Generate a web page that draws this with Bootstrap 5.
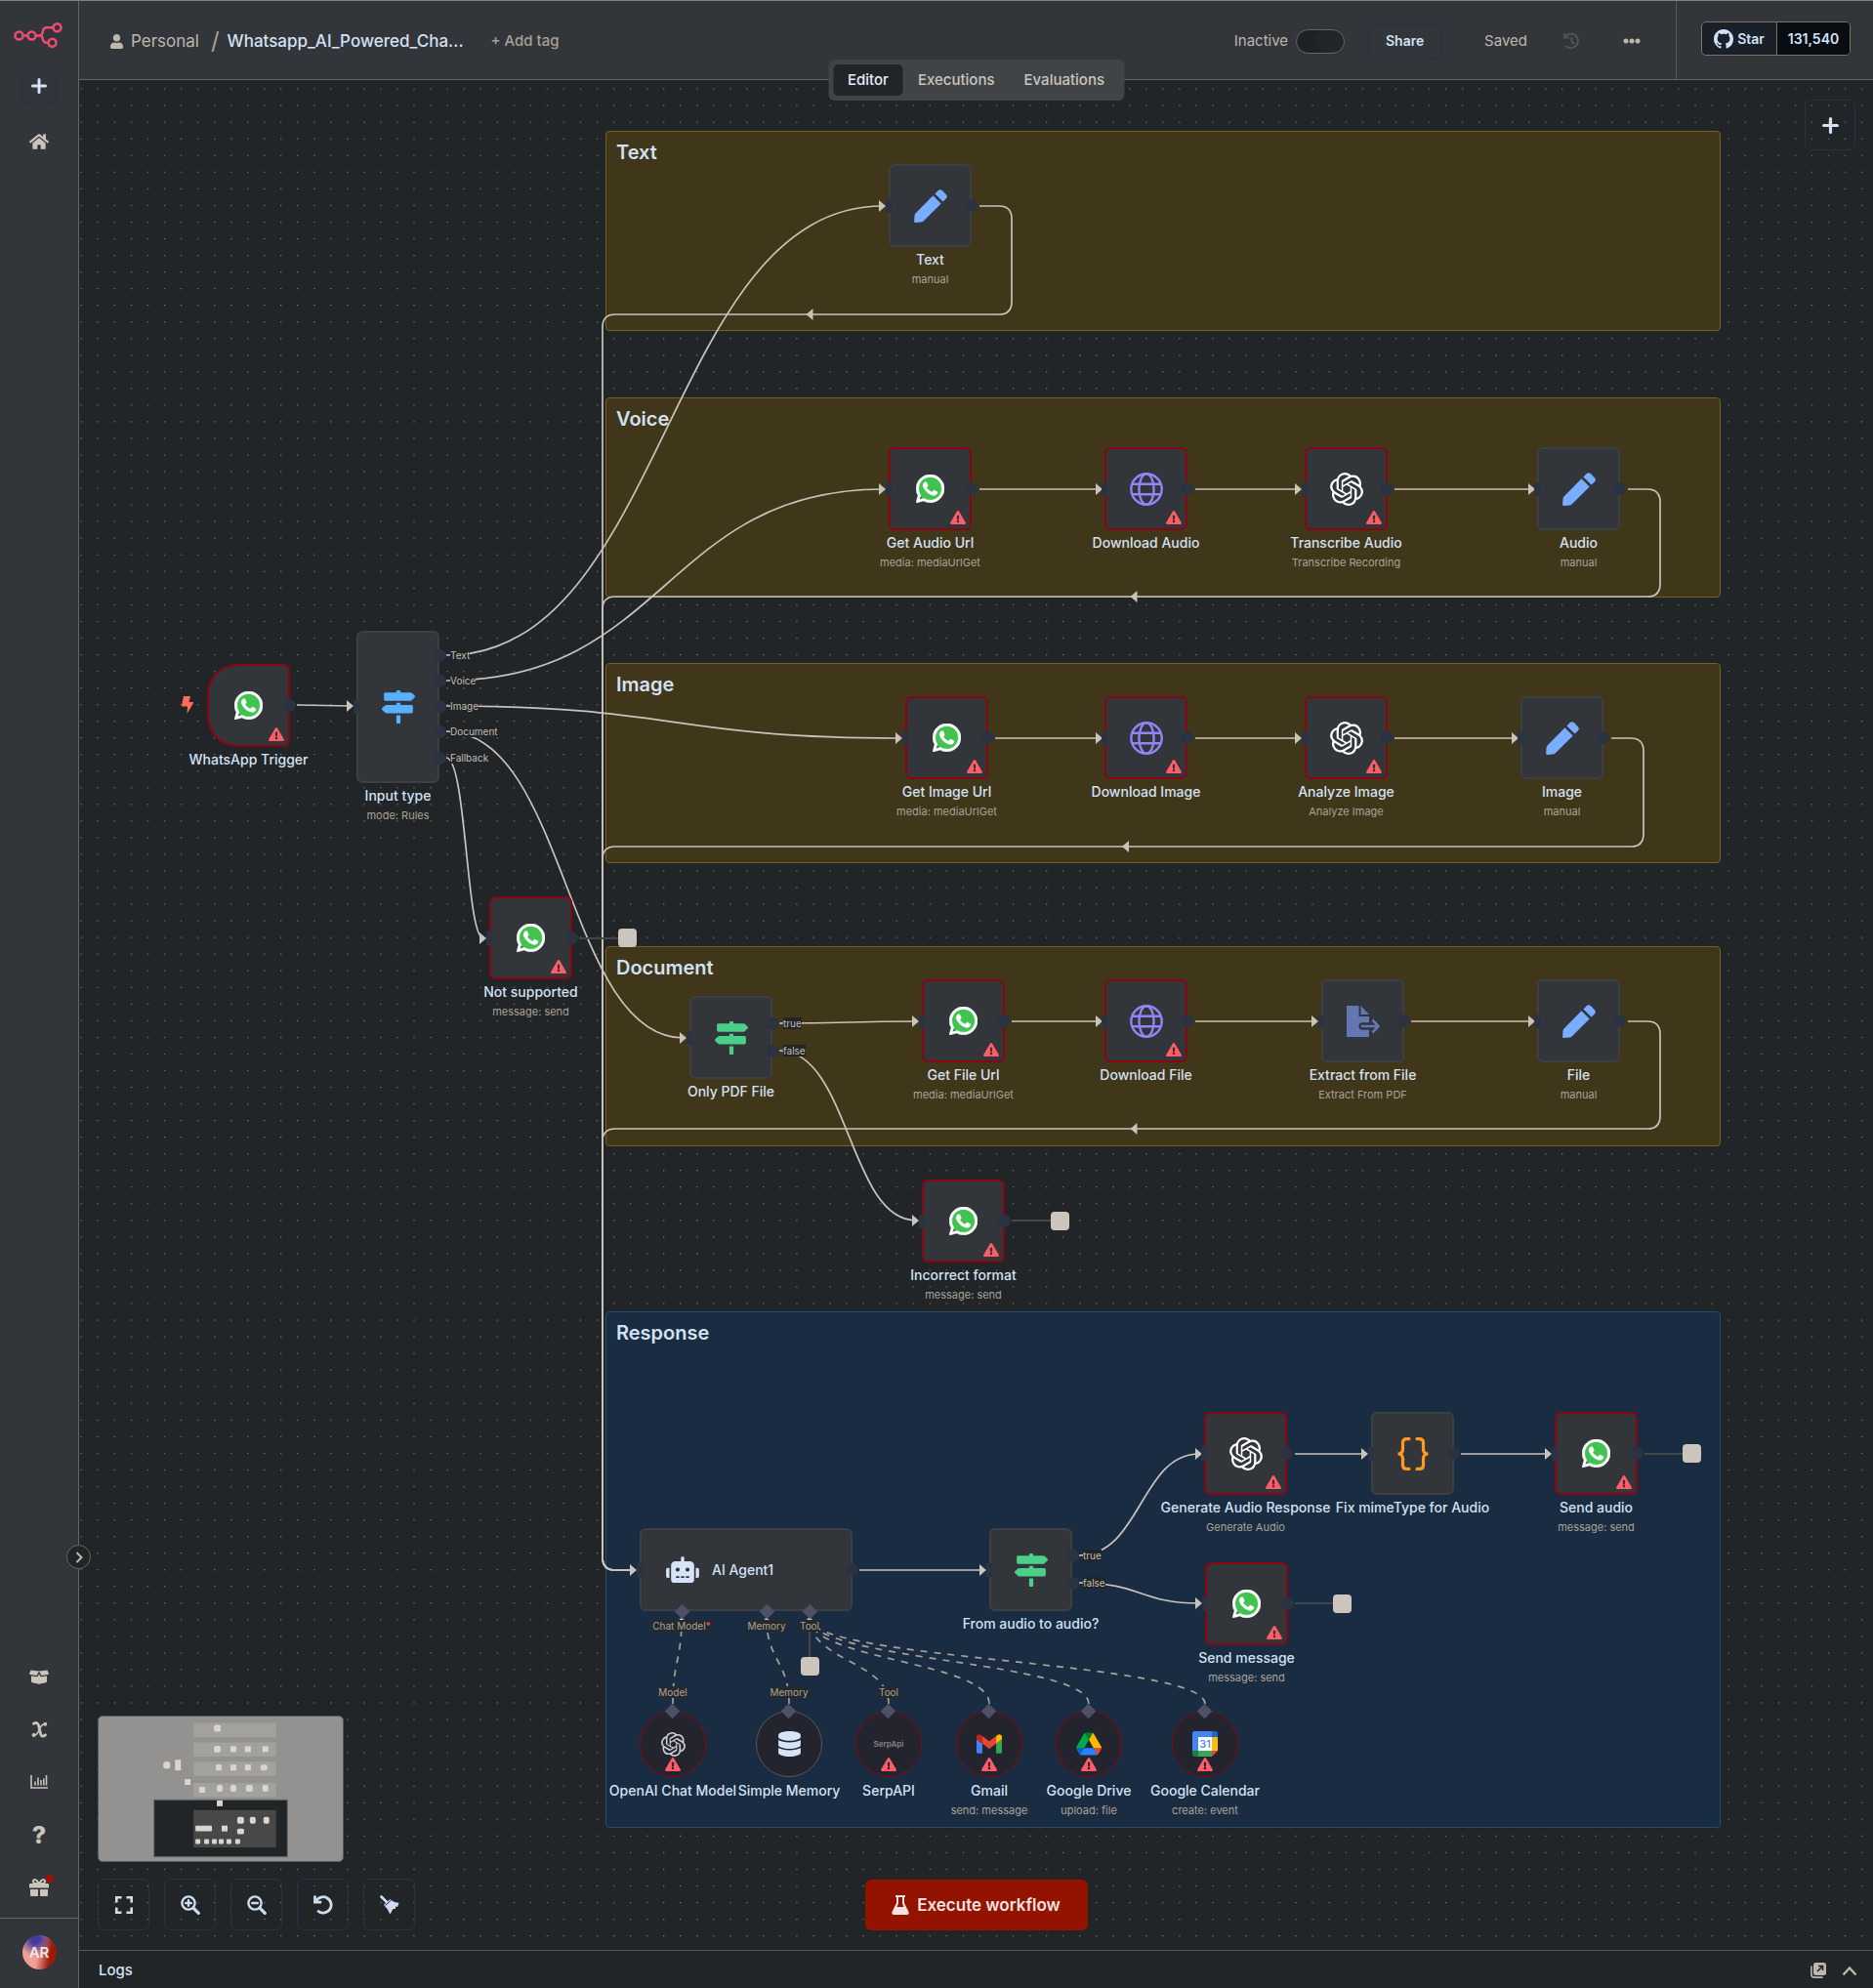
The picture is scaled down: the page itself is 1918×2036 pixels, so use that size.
<!DOCTYPE html>
<html lang="en" data-bs-theme="dark">
<head>
<meta charset="utf-8">
<meta name="viewport" content="width=device-width, initial-scale=1">
<title>Whatsapp_AI_Powered_Chatbot - n8n</title>
<link href="https://cdn.jsdelivr.net/npm/bootstrap@5.3.0/dist/css/bootstrap.min.css" rel="stylesheet">
<style>
  :root { --panel:#323539; --ground:#212528; --line:#6b6459; --ink:#d3e1f3; --dim:#bdb7ae; --edge:#c8c3bb; --outline:#26304a; --danger:#8c0410; --handle:#2b3342; }
  body { background:var(--ground); color:var(--ink); font-family:Inter, "Liberation Sans", sans-serif; font-size:15px; line-height:20px; border-top:1px solid #7d8084; }
  svg { display:block; }
  .shell { min-height:calc(100vh - 1px); }
  .btn { --bs-btn-border-radius:6px; line-height:20px; }

  .side { width:81px; background:var(--panel); border-right:1px solid var(--line); color:#c9c4bc; position:relative; }
  .side a { color:inherit; height:54px; text-decoration:none; }
  .side .logo { height:48px; padding-right:3px; }
  .side .add { width:38px; height:37px; margin-top:20px; border:1px solid var(--outline); color:var(--ink); }
  .side .home { margin-top:12px; }
  .side .userbox { border-top:1px solid var(--line); height:72px; padding-bottom:2px; }
  .side .glyph-q { font-weight:800; font-size:25px; }
  .dot-new { position:absolute; width:8px; height:8px; border-radius:50%; background:#a01200; top:14px; right:25px; }
  .avatar { width:35px; height:35px; border-radius:50%; font-weight:600; color:#f3e6e3; background:radial-gradient(circle at 38% 12%, #443a9c 0 12%, transparent 45%), linear-gradient(100deg, #ef9f95 45%, #9a1a0c 78%); }
  .expander { position:absolute; right:-13px; bottom:429px; width:25px; height:25px; border-radius:50%; border:1px solid var(--line); background:var(--ground); color:var(--dim); z-index:5; padding:0; }

  .topbar { height:81px; background:var(--panel); border-bottom:1px solid var(--line); }
  .crumb { font-size:17px; padding-top:2px; }
  .crumb a { color:var(--dim); }
  .crumb .wf { color:var(--ink); font-weight:500; }
  .slash { font-size:24px; color:#a8a196; }
  .addtag { color:#a8a196; font-size:15px; font-weight:500; border:0; background:none; padding:0; }
  .soft { color:var(--dim); padding-top:2px; }
  .form-switch .form-check-input.activator { width:50px; height:25px; margin:0; background-color:#222629; border:1px solid #6b6459; --bs-form-switch-bg:none; box-shadow:inset 21px 0 0 -1px #1f2225; }
  .share { width:75px; height:37px; border:1px solid var(--outline); color:var(--ink); font-weight:600; font-size:14px; padding:0; }
  .saved { margin:0 24px 0 44px; }
  .more { margin:0 36px 0 44px; }
  .ghbox { border-left:1px solid #55575a; padding:0 23px 3px 25px; }
  .gh { width:153px; height:35px; border:1px solid #7b7260; border-radius:5px; overflow:hidden; font-weight:600; font-size:14px; text-decoration:none; color:#d1e4f7; background:#1a2027; }
  .gh .count { background:#090c12; border-left:1px solid #7b7260; width:75px; }
  .modes { position:absolute; top:60px; left:50%; transform:translateX(-50%); z-index:4; background:#404447; padding:5px; border-radius:6px; }
  .modes .nav-link { padding:6px 15px; height:32px; color:#cbc5bd; font-weight:500; border-radius:5px; }
  .modes .nav-link.active { background:#212528; color:#e2edfb; }

  .canvas { position:relative; overflow:hidden; }
  .layer { position:absolute; left:0; top:0; width:100%; height:100%; }
  .note { position:absolute; width:1142px; height:205px; border:1px solid #74601f; border-radius:4px; background:#40361a; padding:8px 10px; font-size:20px; line-height:26px; font-weight:600; }
  .note.blue { background:#192c41; border-color:#264c6e; }
  .wnode { position:absolute; width:85px; height:85px; background:var(--panel); border:2px solid #3c4044; border-radius:6px; display:flex; align-items:center; justify-content:center; }
  .wnode.bad { border-color:var(--danger); }
  .wnode.start { border-radius:31px 6px 6px 31px; }
  .wnode.tall { height:156px; }
  .wnode.wide { width:218px; justify-content:flex-start; padding-left:25px; gap:13px; font-weight:500; font-size:14px; }
  .wnode.disc { width:68px; height:68px; border-radius:50%; background:#24242e; border-width:1px; border-color:#55575a; }
  .wnode.disc.bad { border-color:var(--danger); }
  .caption { position:absolute; top:100%; left:50%; transform:translateX(-50%); padding-top:6px; text-align:center; white-space:nowrap; font-size:14px; line-height:18px; font-weight:500; }
  .caption div { font-size:11px; line-height:16px; font-weight:400; color:#aaa398; padding-top:3px; }
  .warn { position:absolute; right:4px; bottom:4px; color:#ff5c68; }
  .disc .warn { right:25px; bottom:5px; }
  .hin, .hout { position:absolute; background:var(--handle); }
  .hin { width:6px; height:14px; }
  .hout { width:13px; height:13px; border-radius:50%; }
  .dia { position:absolute; width:11px; height:11px; background:#4f5067; transform:rotate(45deg); }
  .tagtext { position:absolute; font-size:10px; line-height:12px; color:#c3bdb3; background:#212528; white-space:nowrap; }
  .tagtext.mid { transform:translateX(-50%); background:#26292b; color:#aaa398; }
  .tagtext b { color:#ff4a4a; font-weight:500; }
  .plusbox { position:absolute; width:19px; height:19px; border-radius:4px; border:0; padding:0; background:#cbc5bd; }
  .bolt { position:absolute; }
  .serp { font-size:8px; color:#85858c; font-weight:600; }

  .addnode { position:absolute; top:20px; right:18px; width:52px; height:52px; border:1px solid var(--outline); color:var(--ink); padding:0; }
  .dock { position:absolute; left:19px; bottom:20px; }
  .minimap { border:1px solid #55585c; border-radius:5px; width:252px; height:150px; margin-bottom:17px; overflow:hidden; background:#949290; }
  .tools { gap:15px; }
  .dock .btn { width:53px; height:53px; border:1px solid var(--outline); color:#cddcf0; padding:0; }
  .run { position:absolute; bottom:20px; left:50%; transform:translateX(-50%); width:228px; height:52px; background:#931200; color:#f1e4e1; font-weight:600; font-size:17px; padding:0; border:0; }
  .run:hover { background:#a51500; color:#fff; }
  .logs { height:39px; border-top:1px solid #55585a; font-weight:500; padding:2px 16px 0 20px; }
</style>
<script src="https://cdn.jsdelivr.net/npm/bootstrap@5.3.0/dist/js/bootstrap.bundle.min.js"></script>
</head>
<body>

<svg class="d-none" aria-hidden="true">
  <symbol id="i-whatsapp" viewBox="0 0 24 24"><circle cx="12" cy="11.9" r="10.6" fill="#40c351"/><path fill="#fff" stroke="#fff" stroke-width=".5" d="M17.472 14.382c-.297-.149-1.758-.867-2.03-.967-.273-.099-.471-.148-.67.15-.197.297-.767.966-.94 1.164-.173.199-.347.223-.644.075-.297-.15-1.255-.463-2.39-1.475-.883-.788-1.48-1.761-1.653-2.059-.173-.297-.018-.458.13-.606.134-.133.298-.347.446-.52.149-.174.198-.298.298-.497.099-.198.05-.371-.025-.52-.075-.149-.669-1.612-.916-2.207-.242-.579-.487-.5-.669-.51-.173-.008-.371-.01-.57-.01-.198 0-.52.074-.792.372-.272.297-1.04 1.016-1.04 2.479 0 1.462 1.065 2.875 1.213 3.074.149.198 2.096 3.2 5.077 4.487.709.306 1.262.489 1.694.625.712.227 1.36.195 1.871.118.571-.085 1.758-.719 2.006-1.413.248-.694.248-1.289.173-1.413-.074-.124-.272-.198-.57-.347m-5.421 7.403h-.004a9.87 9.87 0 01-5.031-1.378l-.361-.214-3.741.982.998-3.648-.235-.374a9.86 9.86 0 01-1.51-5.26c.001-5.45 4.436-9.884 9.888-9.884 2.64 0 5.122 1.03 6.988 2.898a9.825 9.825 0 012.893 6.994c-.003 5.45-4.437 9.884-9.885 9.884m8.413-18.297A11.815 11.815 0 0012.05 0C5.495 0 .16 5.335.157 11.892c0 2.096.547 4.142 1.588 5.945L.057 24l6.305-1.654a11.882 11.882 0 005.683 1.448h.005c6.554 0 11.89-5.335 11.893-11.893a11.821 11.821 0 00-3.48-8.413z"/></symbol>
  <symbol id="i-openai" viewBox="0 0 24 24"><path fill="currentColor" d="M22.2819 9.8211a5.9847 5.9847 0 0 0-.5157-4.9108 6.0462 6.0462 0 0 0-6.5098-2.9A6.0651 6.0651 0 0 0 4.9807 4.1818a5.9847 5.9847 0 0 0-3.9977 2.9 6.0462 6.0462 0 0 0 .7427 7.0966 5.98 5.98 0 0 0 .511 4.9107 6.051 6.051 0 0 0 6.5146 2.9001A5.9847 5.9847 0 0 0 13.2599 24a6.0557 6.0557 0 0 0 5.7718-4.2058 5.9894 5.9894 0 0 0 3.9977-2.9001 6.0557 6.0557 0 0 0-.7475-7.0729zm-9.022 12.6081a4.4755 4.4755 0 0 1-2.8764-1.0408l.1419-.0804 4.7783-2.7582a.7948.7948 0 0 0 .3927-.6813v-6.7369l2.02 1.1686a.071.071 0 0 1 .038.052v5.5826a4.504 4.504 0 0 1-4.4945 4.4944zm-9.6607-4.1254a4.4708 4.4708 0 0 1-.5346-3.0137l.142.0852 4.783 2.7582a.7712.7712 0 0 0 .7806 0l5.8428-3.3685v2.3324a.0804.0804 0 0 1-.0332.0615L9.74 19.9502a4.4992 4.4992 0 0 1-6.1408-1.6464zM2.3408 7.8956a4.485 4.485 0 0 1 2.3655-1.9728V11.6a.7664.7664 0 0 0 .3879.6765l5.8144 3.3543-2.0201 1.1685a.0757.0757 0 0 1-.071 0l-4.8303-2.7865A4.504 4.504 0 0 1 2.3408 7.872zm16.5963 3.8558L13.1038 8.364 15.1192 7.2a.0757.0757 0 0 1 .071 0l4.8303 2.7913a4.4944 4.4944 0 0 1-.6765 8.1042v-5.6772a.79.79 0 0 0-.407-.667zm2.0107-3.0231l-.142-.0852-4.7735-2.7818a.7759.7759 0 0 0-.7854 0L9.409 9.2297V6.8974a.0662.0662 0 0 1 .0284-.0615l4.8303-2.7866a4.4992 4.4992 0 0 1 6.6802 4.66zM8.3065 12.863l-2.02-1.1638a.0804.0804 0 0 1-.038-.0567V6.0742a4.4992 4.4992 0 0 1 7.3757-3.4537l-.142.0805L8.704 5.459a.7948.7948 0 0 0-.3927.6813zm1.0976-2.3654l2.602-1.4998 2.6069 1.4998v2.9994l-2.5974 1.4997-2.6067-1.4997Z"/></symbol>
  <symbol id="i-pencil" viewBox="0 0 34 34"><g fill="#78adff"><path d="M19.5 6.3 27.7 14.5 9.8 32.3Q8.6 33.5 7 33.6L1.6 34Q0 34 .1 32.4L.5 27Q.6 25.4 1.8 24.200z"/><path d="M21.400 4.400 24.600 1.200Q26.800-.8 29 1.300L32.700 5Q34.800 7.200 32.800 9.400L29.600 12.600z"/></g></symbol>
  <symbol id="i-signs" viewBox="0 0 512 512"><path fill="currentColor" d="M507.31 84.69L464 41.37c-6-6-14.14-9.37-22.63-9.37H288V16c0-8.84-7.16-16-16-16h-32c-8.84 0-16 7.16-16 16v16H56c-13.25 0-24 10.75-24 24v80c0 13.25 10.75 24 24 24h385.37c8.49 0 16.62-3.37 22.63-9.37l43.31-43.31c6.25-6.26 6.25-16.38 0-22.63zM224 496c0 8.84 7.16 16 16 16h32c8.84 0 16-7.16 16-16V384h-64v112zm232-272H288v-32h-64v32H70.63c-8.49 0-16.62 3.37-22.63 9.37L4.69 276.69c-6.25 6.25-6.25 16.38 0 22.63L48 342.63c6 6 14.14 9.37 22.63 9.37H456c13.25 0 24-10.75 24-24v-80c0-13.25-10.75-24-24-24z"/></symbol>
  <symbol id="i-globe" viewBox="0 0 34 34"><g fill="none" stroke="#8f85f5" stroke-width="2.4"><circle cx="17" cy="17" r="15.700"/><ellipse cx="17" cy="17" rx="7.600" ry="15.700"/><path d="M2.200 11.800H31.800M2.200 22.200H31.800"/></g></symbol>
  <symbol id="i-export" viewBox="0 0 34 34"><g fill="#6477b2"><path d="M0 1H12.500V12H23V18.200H16Q12.500 18.200 12.500 22T16 25.800H23V33H0z"/><path d="M14.500 1 23 10H14.500z"/></g><path d="M15 22H32M26.500 15.500 32.500 22 26.500 28.500" fill="none" stroke="#6477b2" stroke-width="2.600"/></symbol>
  <symbol id="i-code" viewBox="0 0 34 34"><path d="M13 1.600H10.500Q6.500 1.600 6.500 5.600V12Q6.500 17 1.500 17 6.500 17 6.500 22V28.400Q6.500 32.400 10.500 32.400H13M21 1.600H23.500Q27.500 1.600 27.500 5.600V12Q27.500 17 32.500 17 27.500 17 27.500 22V28.400Q27.500 32.400 23.500 32.400H21" fill="none" stroke="#ff9a1f" stroke-width="3.200" stroke-linecap="round"/></symbol>
  <symbol id="i-robot" viewBox="0 0 640 512"><path fill="currentColor" d="M32,224H64V416H32A31.96166,31.96166,0,0,1,0,384V256A31.96166,31.96166,0,0,1,32,224Zm512-48V448a64.06328,64.06328,0,0,1-64,64H160a64.06328,64.06328,0,0,1-64-64V176a79.974,79.974,0,0,1,80-80H288V32a32,32,0,0,1,64,0V96H464A79.974,79.974,0,0,1,544,176ZM264,256a40,40,0,1,0-40,40A39.997,39.997,0,0,0,264,256Zm-8,128H192v32h64Zm96,0H288v32h64ZM456,256a40,40,0,1,0-40,40A39.997,39.997,0,0,0,456,256Zm-8,128H384v32h64ZM640,256V384a31.96166,31.96166,0,0,1-32,32H576V224h32A31.96166,31.96166,0,0,1,640,256Z"/></symbol>
  <symbol id="i-db" viewBox="0 0 448 512"><path fill="#d5e5f7" d="M448 73.143v45.714C448 159.143 347.667 192 224 192S0 159.143 0 118.857V73.143C0 32.857 100.333 0 224 0s224 32.857 224 73.143zM448 176v102.857C448 319.143 347.667 352 224 352S0 319.143 0 278.857V176c48.125 33.143 136.208 48.572 224 48.572S399.874 209.143 448 176zm0 160v102.857C448 479.143 347.667 512 224 512S0 479.143 0 438.857V336c48.125 33.143 136.208 48.572 224 48.572S399.874 369.143 448 336z"/></symbol>
  <symbol id="i-gmail" viewBox="52 42 88 66"><path fill="#4285f4" d="M58 108h14V74L52 59v43c0 3.320 2.690 6 6 6"/><path fill="#34a853" d="M120 108h14c3.320 0 6-2.690 6-6V59l-20 15"/><path fill="#fbbc04" d="M120 48v26l20-15v-8c0-7.420-8.470-11.650-14.400-7.200"/><path fill="#ea4335" d="M72 74V48l24 18 24-18v26L96 92"/><path fill="#c5221f" d="M52 51v8l20 15V48l-5.600-4.200c-5.940-4.450-14.400-.220-14.400 7.200"/></symbol>
  <symbol id="i-drive" viewBox="0 0 87.300 78"><path d="M6.600 66.850l3.850 6.650c.8 1.400 1.950 2.500 3.300 3.300l13.750-23.800h-27.500c0 1.550.4 3.100 1.200 4.500z" fill="#0066da"/><path d="M43.650 25l-13.750-23.800c-1.350.8-2.500 1.900-3.300 3.300l-25.400 44a9.060 9.060 0 0 0-1.200 4.500h27.500z" fill="#00ac47"/><path d="M73.550 76.800c1.350-.8 2.500-1.900 3.300-3.300l1.600-2.750 7.650-13.250c.8-1.400 1.200-2.950 1.200-4.500h-27.502l5.852 11.500z" fill="#ea4335"/><path d="M43.650 25l13.750-23.800c-1.350-.8-2.900-1.200-4.500-1.200h-18.500c-1.600 0-3.150.45-4.500 1.200z" fill="#00832d"/><path d="M59.800 53h-32.300l-13.750 23.800c1.350.8 2.900 1.200 4.500 1.200h50.800c1.600 0 3.150-.45 4.500-1.200z" fill="#2684fc"/><path d="M73.400 26.500l-12.700-22c-.8-1.400-1.950-2.500-3.300-3.300l-13.750 23.800 16.150 28h27.450c0-1.550-.4-3.100-1.200-4.500z" fill="#ffba00"/></symbol>
  <symbol id="i-cal" viewBox="0 0 26 26"><path fill="#4285f4" d="M2 0H20V6H6V20H0V2Q0 0 2 0"/><path fill="#1967d2" d="M20 0H24Q26 0 26 2V6H20z"/><path fill="#fbbc04" d="M20 6H26V20H20z"/><path fill="#34a853" d="M6 20H20V26H6z"/><path fill="#188038" d="M0 20H6V26H2Q0 26 0 24z"/><path fill="#ea4335" d="M20 20H26L20 26z"/><path fill="#fff" d="M6 6H20V20H6z"/><text x="13" y="17" text-anchor="middle" font-family="Inter, sans-serif" font-size="11" font-weight="500" fill="#4285f4">31</text></symbol>
  <symbol id="i-warn" viewBox="0 0 576 512"><path fill="currentColor" d="M569.517 440.013C587.975 472.007 564.806 512 527.940 512H48.054c-36.937 0-59.999-40.055-41.577-71.987L246.423 23.985c18.467-32.009 64.720-31.951 83.154 0l239.940 416.028zM288 354c-25.405 0-46 20.595-46 46s20.595 46 46 46 46-20.595 46-46-20.595-46-46-46zm-43.673-165.346l7.418 136c.347 6.364 5.609 11.346 11.982 11.346h48.546c6.373 0 11.635-4.982 11.982-11.346l7.418-136c.375-6.874-5.098-12.654-11.982-12.654h-63.383c-6.884 0-12.356 5.780-11.981 12.654z"/></symbol>
  <symbol id="i-plus" viewBox="0 0 16 16"><path d="M8 1.500V14.500M1.500 8H14.500" fill="none" stroke="currentColor" stroke-width="3" stroke-linecap="round"/></symbol>
</svg>

<div class="shell d-flex">
  <nav class="side d-flex flex-column flex-shrink-0" aria-label="Main">
    <a class="logo d-flex justify-content-center align-items-end" href="#" aria-label="n8n">
      <svg width="50" height="26" viewBox="0 0 50 26" fill="none" stroke="#ea4b71" stroke-width="2.600"><circle cx="5.500" cy="13.500" r="4"/><circle cx="18.500" cy="13.500" r="4"/><circle cx="44.500" cy="5.300" r="4"/><circle cx="39.500" cy="20.700" r="4"/><path d="M9.500 13.500H14.500M22.500 13.500H26Q29 13.500 29.500 10.500L30 8.500Q30.700 5.300 34 5.300H40.500M26 13.500Q29 13.500 29.500 16L30 17.500Q30.700 20.700 34 20.700H35.500"/></svg>
    </a>
    <button class="btn add mx-auto p-0 d-flex align-items-center justify-content-center" aria-label="Create"><svg width="16" height="16"><use href="#i-plus"/></svg></button>
    <a class="home d-flex align-items-center justify-content-center" href="#" aria-label="Overview"><svg width="20" height="18" viewBox="0 0 576 512" fill="currentColor"><path d="M280.370 148.260L96 300.110V464a16 16 0 0 0 16 16l112.060-.290a16 16 0 0 0 15.920-16V368a16 16 0 0 1 16-16h64a16 16 0 0 1 16 16v95.640a16 16 0 0 0 16 16.050L464 480a16 16 0 0 0 16-16V300L295.670 148.260a12.190 12.190 0 0 0-15.300 0zM571.600 251.470L488 182.560V44.050a12 12 0 0 0-12-12h-56a12 12 0 0 0-12 12v72.610L318.470 43a48 48 0 0 0-61 0L4.340 251.470a12 12 0 0 0-1.600 16.900l25.500 31A12 12 0 0 0 45.150 301l235.220-193.740a12.190 12.190 0 0 1 15.300 0L530.900 301a12 12 0 0 0 16.900-1.600l25.500-31a12 12 0 0 0-1.700-16.930z"/></svg></a>
    <div class="mt-auto mb-1 d-flex flex-column">
      <a class="d-flex align-items-center justify-content-center" href="#" aria-label="Templates"><svg width="20" height="15" viewBox="0 0 20 15" fill="currentColor"><path d="M1.500.5 10 1.500 7.600 6 1 5Q0 4.800.1 4zM18.500.5 10 1.500 12.400 6 19 5Q20 4.800 19.900 4z"/><path d="M2 6.500 8.300 7.300 10 4.500 11.700 7.300 18 6.500V12Q18 13 17 13.300L10 14.700 3 13.300Q2 13 2 12z"/></svg></a>
      <a class="d-flex align-items-center justify-content-center" href="#" aria-label="Variables"><svg width="17" height="17" viewBox="0 0 17 17" fill="none" stroke="currentColor" stroke-linecap="round"><path d="M2.500 2.200Q6 .2 7.300 3.500L9.700 13Q10.800 16.800 14.500 13.800" stroke-width="2.800"/><path d="M14 2.800Q11.500 2.200 9.500 6L7 11Q5 14.700 2.600 13.800" stroke-width="1.600"/><circle cx="14.200" cy="2.800" r="1.300" fill="currentColor" stroke-width="1.400"/><circle cx="2.600" cy="13.900" r="1.300" fill="currentColor" stroke-width="1.400"/></svg></a>
      <a class="d-flex align-items-center justify-content-center" href="#" aria-label="Insights"><svg width="18" height="14" viewBox="0 0 18 14" fill="none" stroke="currentColor" stroke-width="1.600"><path d="M1 0V13H18M5 10.500V6.500M8 10.500V2.500M11 10.500V5M13.800 10.500V3.500M16.500 10.500V0"/></svg></a>
      <a class="d-flex align-items-center justify-content-center glyph-q" href="#" aria-label="Help">?</a>
      <a class="d-flex align-items-center justify-content-center position-relative" href="#" aria-label="What's new"><svg width="20" height="18" viewBox="0 0 20 18"><path fill="currentColor" d="M1 5H19Q20 5 20 6V9.500H0V6Q0 5 1 5M1 11H9V18H2Q1 18 1 17zM11 11H19V17Q19 18 18 18H11z"/><path d="M10 5Q6.500-.5 4.500 1.500T6 5H14Q17.500 3.500 15.500 1.500T10 5" fill="none" stroke="currentColor" stroke-width="1.800"/></svg><span class="dot-new"></span></a>
    </div>
    <div class="userbox d-flex align-items-center justify-content-center"><span class="avatar d-flex align-items-center justify-content-center">AR</span></div>
    <button class="expander d-flex align-items-center justify-content-center" aria-label="Expand sidebar"><svg width="8" height="12" viewBox="0 0 8 12" fill="none" stroke="currentColor" stroke-width="2"><path d="M1.500 1 6.500 6 1.500 11"/></svg></button>
  </nav>

  <div class="flex-grow-1 d-flex flex-column position-relative overflow-hidden">
    <header class="topbar d-flex flex-shrink-0">
      <div class="crumb d-flex align-items-center ps-4 ms-2">
        <a class="d-flex align-items-center text-decoration-none" href="#"><svg class="me-2" width="13" height="15" viewBox="0 0 448 512" fill="currentColor"><path d="M224 256c70.700 0 128-57.300 128-128S294.700 0 224 0 96 57.300 96 128s57.300 128 128 128zm89.600 32h-16.700c-22.200 10.200-46.900 16-72.900 16s-50.600-5.800-72.900-16h-16.700C60.200 288 0 348.200 0 422.400V464c0 26.500 21.500 48 48 48h352c26.500 0 48-21.500 48-48v-41.600c0-74.200-60.200-134.400-134.400-134.400z"/></svg>Personal</a>
        <span class="slash ps-2 ms-1 pe-2">/</span>
        <span class="wf">Whatsapp_AI_Powered_Cha...</span>
        <button class="addtag ms-4 ps-1">+ Add tag</button>
      </div>
      <div class="ms-auto d-flex align-items-center soft">
        <label for="active" class="me-2">Inactive</label>
        <div class="form-check form-switch m-0 p-0 d-flex me-4"><input class="form-check-input activator" type="checkbox" role="switch" id="active"></div>
        <button class="btn share">Share</button>
        <span class="saved">Saved</span>
        <svg class="ms-2 ps-1" width="22" height="18" viewBox="0 0 18 18" fill="none" stroke="#515457" stroke-width="2"><path d="M2 1V5.500H6.500M2.500 5A7.300 7.300 0 1 1 3.500 14M9.500 5V9.500L12 12"/></svg>
        <svg class="more" width="18" height="6" viewBox="0 0 18 6" fill="#bdb7ae"><circle cx="3" cy="3" r="2.500"/><circle cx="9" cy="3" r="2.500"/><circle cx="15" cy="3" r="2.500"/></svg>
      </div>
      <div class="ghbox d-flex align-items-center">
        <a class="gh d-flex" href="#"><span class="flex-grow-1 d-flex align-items-center justify-content-center gap-1"><svg width="20" height="20" viewBox="0 0 16 16" fill="currentColor"><path d="M8 0C3.580 0 0 3.580 0 8c0 3.540 2.290 6.530 5.470 7.590.4.070.550-.170.550-.380 0-.190-.010-.820-.010-1.490-2.010.370-2.530-.490-2.690-.940-.090-.230-.480-.940-.820-1.130-.280-.150-.680-.520-.010-.530.630-.010 1.080.580 1.230.820.720 1.210 1.870.870 2.330.660.070-.520.280-.870.510-1.070-1.780-.200-3.640-.890-3.640-3.950 0-.870.310-1.590.820-2.150-.080-.200-.360-1.020.080-2.120 0 0 .670-.210 2.200.820.640-.180 1.320-.270 2-.270.680 0 1.360.090 2 .270 1.530-1.040 2.200-.820 2.200-.820.440 1.100.160 1.920.080 2.120.510.560.820 1.270.820 2.150 0 3.070-1.870 3.750-3.650 3.950.290.250.540.730.540 1.480 0 1.070-.010 1.930-.010 2.200 0 .210.150.460.550.380A8.013 8.013 0 0016 8c0-4.420-3.580-8-8-8z"/></svg>Star</span><span class="count d-flex align-items-center justify-content-center">131,540</span></a>
      </div>
    </header>
    <ul class="modes nav nav-pills flex-nowrap">
      <li class="nav-item"><a class="nav-link active" aria-current="page" href="#">Editor</a></li>
      <li class="nav-item"><a class="nav-link" href="#">Executions</a></li>
      <li class="nav-item"><a class="nav-link" href="#">Evaluations</a></li>
    </ul>

    <main class="canvas flex-grow-1">
      <svg class="layer" aria-hidden="true"><defs><pattern id="grid" width="20" height="20" patternUnits="userSpaceOnUse" patternTransform="translate(-6 0) scale(.852)"><rect x="9" y="10" width="1.400" height="1.400" fill="#7c7f80"/></pattern></defs><rect width="100%" height="100%" fill="url(#grid)"/></svg>
      <div id="notes"></div>
      <svg class="layer" id="edges" aria-hidden="true"></svg>
      <div id="nodes"></div>

      <button class="btn addnode d-flex align-items-center justify-content-center" aria-label="Add node"><svg width="17" height="17"><use href="#i-plus"/></svg></button>

      <div class="dock">
        <svg class="minimap" viewBox="301 592 754 448" preserveAspectRatio="none" role="img" aria-label="Workflow overview">
          <rect x="472" y="850" width="412" height="177" fill="#212528" stroke="#6d6d6d" stroke-width="3"/>
          <g fill="#a3a19e"><path d="M594 612H849V656H594zM594 672H849V716H594zM594 732H849V776H594zM594 798H849V842H594z"/><path fill="#474847" d="M594 882H849V998H594z"/></g>
          <g fill="#d9d6d1"><rect x="501" y="732" width="21" height="21" rx="6"/><rect x="537" y="726" width="18" height="33"/><rect x="567" y="786" width="18" height="18"/>
          <rect x="657" y="618" width="21" height="21" rx="6"/><rect x="657" y="683" width="21" height="20" rx="6"/><rect x="708" y="684" width="18" height="18"/><rect x="753" y="684" width="18" height="18"/><rect x="807" y="684" width="18" height="18"/>
          <rect x="663" y="741" width="18" height="18"/><rect x="708" y="741" width="18" height="18"/><rect x="753" y="741" width="18" height="18"/><rect x="801" y="741" width="21" height="18" rx="6"/>
          <rect x="612" y="810" width="18" height="18"/><rect x="666" y="804" width="18" height="21" rx="6"/><rect x="708" y="804" width="18" height="21" rx="6"/><rect x="756" y="804" width="21" height="21" rx="6"/><rect x="807" y="804" width="18" height="21" rx="6"/><rect x="666" y="852" width="18" height="18"/>
          <rect x="729" y="903" width="21" height="21" rx="6"/><rect x="768" y="903" width="18" height="21" rx="6"/><rect x="810" y="903" width="18" height="21" rx="6"/><rect x="729" y="939" width="21" height="18" rx="5"/><rect x="600" y="930" width="51" height="18" rx="3"/><rect x="681" y="930" width="18" height="18"/>
          <rect x="600" y="972" width="15" height="15" rx="3"/><rect x="627" y="972" width="15" height="15" rx="3"/><rect x="651" y="972" width="15" height="15" rx="3"/><rect x="672" y="972" width="15" height="15" rx="3"/><rect x="696" y="972" width="15" height="15" rx="3"/><rect x="723" y="972" width="15" height="15" rx="3"/></g>
        </svg>
        <div class="tools d-flex">
          <button class="btn d-flex align-items-center justify-content-center" aria-label="Fit to view"><svg width="18" height="18" viewBox="0 0 18 18" fill="none" stroke="currentColor" stroke-width="2.600"><path d="M1.300 6.500V1.300H6.500M11.500 1.300H16.700V6.500M16.700 11.500V16.700H11.500M6.500 16.700H1.300V11.500"/></svg></button>
          <button class="btn d-flex align-items-center justify-content-center" aria-label="Zoom in"><svg width="20" height="20" viewBox="0 0 20 20" fill="none" stroke="currentColor" stroke-width="2.400" stroke-linecap="round"><circle cx="8" cy="8" r="6.600"/><path d="M8 5.200V10.800M5.200 8H10.800"/><path d="M13.300 13.300 18.300 18.300" stroke-width="3.200"/></svg></button>
          <button class="btn d-flex align-items-center justify-content-center" aria-label="Zoom out"><svg width="20" height="20" viewBox="0 0 20 20" fill="none" stroke="currentColor" stroke-width="2.400" stroke-linecap="round"><circle cx="8" cy="8" r="6.600"/><path d="M5.200 8H10.800"/><path d="M13.300 13.300 18.300 18.300" stroke-width="3.200"/></svg></button>
          <button class="btn d-flex align-items-center justify-content-center" aria-label="Reset zoom"><svg width="20" height="20" viewBox="0 0 20 20" fill="none" stroke="currentColor" stroke-width="2.800"><path d="M1.500.5V7.200H8.200M2.500 6.500A8.200 8.200 0 1 1 4.200 15.800"/></svg></button>
          <button class="btn d-flex align-items-center justify-content-center" aria-label="Tidy up workflow"><svg width="20" height="20" viewBox="0 0 20 20"><path d="M1.500 1.500 7 7" stroke="currentColor" stroke-width="2.600" stroke-linecap="round"/><path fill="currentColor" d="M5 9 10.500 4Q14 7.500 19.500 8L18 12 16 11.500 16 14 13.500 14 10.500 19.500Q8.500 14 4 10z"/><path d="M5.500 10.500 12 4.500" stroke="#212528" stroke-width="1"/></svg></button>
        </div>
      </div>
      <button class="btn run d-flex align-items-center justify-content-center"><svg class="me-2" width="18" height="20" viewBox="0 0 18 20"><path fill="currentColor" d="M4 0H14V2H13V8L17.500 17Q18.500 20 15.500 20H2.500Q-.5 20 .5 17L5 8V2H4zM7 2V8.500L5.500 12H12.500L11 8.500V2z" fill-rule="evenodd"/></svg>Execute workflow</button>
    </main>

    <footer class="logs d-flex align-items-center flex-shrink-0">
      <span>Logs</span>
      <svg class="ms-auto me-3" width="16" height="16" viewBox="0 0 16 16"><path fill="#bdb7ae" d="M5.500 0H13.500Q16 0 16 2.500V10.500Q16 13 13.500 13H5.500Q3 13 3 10.500V2.500Q3 0 5.500 0"/><path d="M7 9 12 4M8 3.500H12.500V8" stroke="#212528" stroke-width="1.600" fill="none"/><path d="M.9 3.500V12Q.9 15.100 4 15.100H12.500" stroke="#bdb7ae" stroke-width="1.600" fill="none"/></svg>
      <svg width="16" height="11" viewBox="0 0 16 11" fill="none" stroke="#bdb7ae" stroke-width="2.400"><path d="M1.500 9.500 8 2.500 14.500 9.500"/></svg>
    </footer>
  </div>
</div>

<script>
// Window position of the canvas corner; all coordinates below are window coordinates.
const OX = 81, OY = 82;
const at = (x, y) => `style="left:${x - OX}px;top:${y - OY}px"`;
const use = (id, w, h = w, color = '') => `<svg width="${w}" height="${h}"${color ? ` color="${color}"` : ''}><use href="#i-${id}"/></svg>`;

const notes = [['Text', 134], ['Voice', 407], ['Image', 679], ['Document', 969], ['Response', 1343, 'blue']];
document.getElementById('notes').innerHTML = notes.map(([t, y, c]) =>
  `<div class="note ${c || ''}" style="left:${620 - OX}px;top:${y - OY}px${c ? ';height:529px' : ''}">${t}</div>`).join('');

const icon = {
  wa: use('whatsapp', 29), ai: use('openai', 34, 34, '#fff'), pen: use('pencil', 34), web: use('globe', 34),
  sw: use('signs', 34, 34, '#59b0ff'), iff: use('signs', 34, 34, '#4bd089'), exp: use('export', 34), code: use('code', 34),
  bot: use('robot', 34, 27, '#d5e5f7'), ai2: use('openai', 25, 25, '#c9cdd6'), db: use('db', 23, 26), gm: use('gmail', 26, 20),
  gd: use('drive', 26, 24), gc: use('cal', 26), serp: '<span class="serp">SerpApi</span>'
};
// icon, x, y, classes, title, subtitle
const nodes = [
  ['wa', 212, 680, 'bad start noin', 'WhatsApp Trigger'], ['sw', 365, 646, 'tall multi', 'Input type', 'mode: Rules'],
  ['wa', 501, 918, 'bad', 'Not supported', 'message: send'], ['pen', 910, 168, '', 'Text', 'manual'],
  ['wa', 910, 458, 'bad', 'Get Audio Url', 'media: mediaUrlGet'], ['web', 1131, 458, 'bad', 'Download Audio'],
  ['ai', 1336, 458, 'bad', 'Transcribe Audio', 'Transcribe Recording'], ['pen', 1574, 458, '', 'Audio', 'manual'],
  ['wa', 927, 713, 'bad', 'Get Image Url', 'media: mediaUrlGet'], ['web', 1131, 713, 'bad', 'Download Image'],
  ['ai', 1336, 713, 'bad', 'Analyze Image', 'Analyze Image'], ['pen', 1557, 713, '', 'Image', 'manual'],
  ['iff', 706, 1020, 'multi', 'Only PDF File'], ['wa', 944, 1003, 'bad', 'Get File Url', 'media: mediaUrlGet'],
  ['web', 1131, 1003, 'bad', 'Download File'], ['exp', 1353, 1003, '', 'Extract from File', 'Extract From PDF'],
  ['pen', 1574, 1003, '', 'File', 'manual'], ['wa', 944, 1208, 'bad', 'Incorrect format', 'message: send'],
  ['ai', 1233, 1446, 'bad', 'Generate Audio Response', 'Generate Audio'], ['code', 1404, 1446, '', 'Fix mimeType for Audio'],
  ['wa', 1592, 1446, 'bad', 'Send audio', 'message: send'], ['wa', 1234, 1600, 'bad', 'Send message', 'message: send'],
  ['iff', 1013, 1565, 'multi', 'From audio to audio?'], ['bot', 655, 1565, 'wide', 'AI Agent1'],
  ['ai2', 655, 1752, 'disc bad', 'OpenAI Chat Model'], ['db', 774, 1752, 'disc', 'Simple Memory'], ['serp', 876, 1752, 'disc bad', 'SerpAPI'],
  ['gm', 979, 1752, 'disc bad', 'Gmail', 'send: message'], ['gd', 1081, 1752, 'disc bad', 'Google Drive', 'upload: file'],
  ['gc', 1200, 1752, 'disc bad', 'Google Calendar', 'create: event']
];
let html = '';
const has = (c, w) => c.split(' ').includes(w);
for (const [ic, x, y, c, t, s] of nodes) {
  const wide = has(c, 'wide');
  html += `<div class="wnode ${c}" ${at(x, y)}>${icon[ic]}${wide ? `<span>${t}</span>` : ''}` +
    (has(c, 'bad') ? `<span class="warn">${use('warn', 16, 14)}</span>` : '') +
    (wide ? '' : `<div class="caption">${t}${s ? `<div>${s}</div>` : ''}</div>`) + '</div>';
  if (has(c, 'disc')) { html += `<span class="dia" ${at(x + 28, y - 5)}></span>`; continue; }
  const cy = y + (has(c, 'tall') ? 77 : 42), w = wide ? 218 : 85;
  if (!has(c, 'noin')) html += `<span class="hin" ${at(x - 3, cy - 6)}></span>`;
  if (!has(c, 'multi')) html += `<span class="hout" ${at(x + w - 7, cy - 6)}></span>`;
}
const outs = [['Text', 450, 671], ['Voice', 450, 697], ['Image', 450, 723], ['Document', 450, 749], ['Fallback', 450, 776],
  ['true', 791, 1048], ['false', 791, 1076], ['true', 1098, 1593], ['false', 1098, 1621]];
for (const [t, x, y] of outs) html += `<span class="hout" ${at(x - 6, y - 6)}></span><span class="tagtext" ${at(x + 11, y - 6)}>${t}</span>`;
for (const x of [698, 785, 829]) html += `<span class="dia" ${at(x - 5, 1645)}></span>`;
for (const [t, x, y] of [['Chat Model<b>*</b>', 698, 1659], ['Memory', 785, 1659], ['Tool', 829, 1659], ['Model', 689, 1727], ['Memory', 808, 1727], ['Tool', 910, 1727]])
  html += `<span class="tagtext mid" ${at(x, y)}>${t}</span>`;
for (const [x, y] of [[633, 951], [1076, 1241], [1723, 1479], [1365, 1633], [820, 1697]])
  html += `<button class="plusbox" aria-label="Add node after" ${at(x, y)}></button>`;
html += `<svg class="bolt" width="12" height="18" viewBox="0 0 12 18" ${at(186, 713)}><path fill="#ff6d5a" d="M2 0H9L7.500 6H11.500Q12.300 6 12 7L5.500 18 6 10.500H1Q0 10.500.1 9.500z"/></svg>`;
document.getElementById('nodes').innerHTML = html;

let e = '';
const arrow = (x, y) => `<path class="a" d="M${x} ${y}l-7 -6v12z"/>`;
const curve = (x1, y1, x2, y2) => { const m = (x1 + x2) / 2; e += `<path d="M${x1} ${y1}C${m} ${y1} ${m} ${y2} ${x2 - 3} ${y2}"/>` + arrow(x2, y2); };
[[304,722,362,723],[457,671,907,211],[457,697,907,501],[457,723,924,756],[457,749,703,1063],[457,776,498,961],
 [1003,501,1129,501],[1224,501,1333,501],[1428,501,1572,501],[1019,756,1129,756],[1224,756,1333,756],[1428,756,1555,756],
 [798,1048,941,1046],[798,1076,941,1250],[1036,1046,1129,1046],[1224,1046,1350,1046],[1445,1046,1572,1046],
 [880,1608,1010,1608],[1105,1593,1231,1489],[1105,1621,1231,1642],[1326,1489,1401,1489],[1496,1489,1589,1489]].forEach(p => curve(...p));
for (const [x1, y1, xr, yb] of [[1003,211,1036,322],[1667,501,1700,611],[1650,756,1683,867],[1667,1046,1700,1156]]) {
  const r = 13, xm = (617 + xr) / 2;
  e += `<path d="M${x1} ${y1}H${xr - r}Q${xr} ${y1} ${xr} ${y1 + r}V${yb - r}Q${xr} ${yb} ${xr - r} ${yb}H${617 + r}Q617 ${yb} 617 ${yb + r}V${1608 - r}Q617 1608 ${617 + r} 1608H648"/><path class="a" d="M${xm - 1} ${yb}l7 -6v12z"/>`;
}
e += arrow(652, 1608);
for (const [x, y, w] of [[593,961,40],[1036,1250,40],[1684,1489,40],[1326,1642,40]]) e += `<path class="ghost" d="M${x} ${y}h${w}"/>`;
e += '<path class="ghost" d="M829 1657V1697"/>';
for (const [a, b] of [[689,698],[808,785],[910,829],[1013,829],[1115,829],[1234,829]])
  e += `<path class="dash" d="M${a} 1745C${a} 1701 ${b} 1701 ${b} 1657"/><path class="a" d="M${b} 1656l-6 7h12z"/>`;
document.getElementById('edges').innerHTML = `<style>#edges g path{fill:none;stroke:#c8c3bb;stroke-width:1.700}#edges g .a{fill:#c8c3bb;stroke:none}#edges g .ghost{stroke:#43474a;stroke-width:2}#edges g .dash{stroke:#a8a196;stroke-dasharray:7 7}</style><g transform="translate(${-OX} ${-OY})">${e}</g>`;
</script>
</body>
</html>
